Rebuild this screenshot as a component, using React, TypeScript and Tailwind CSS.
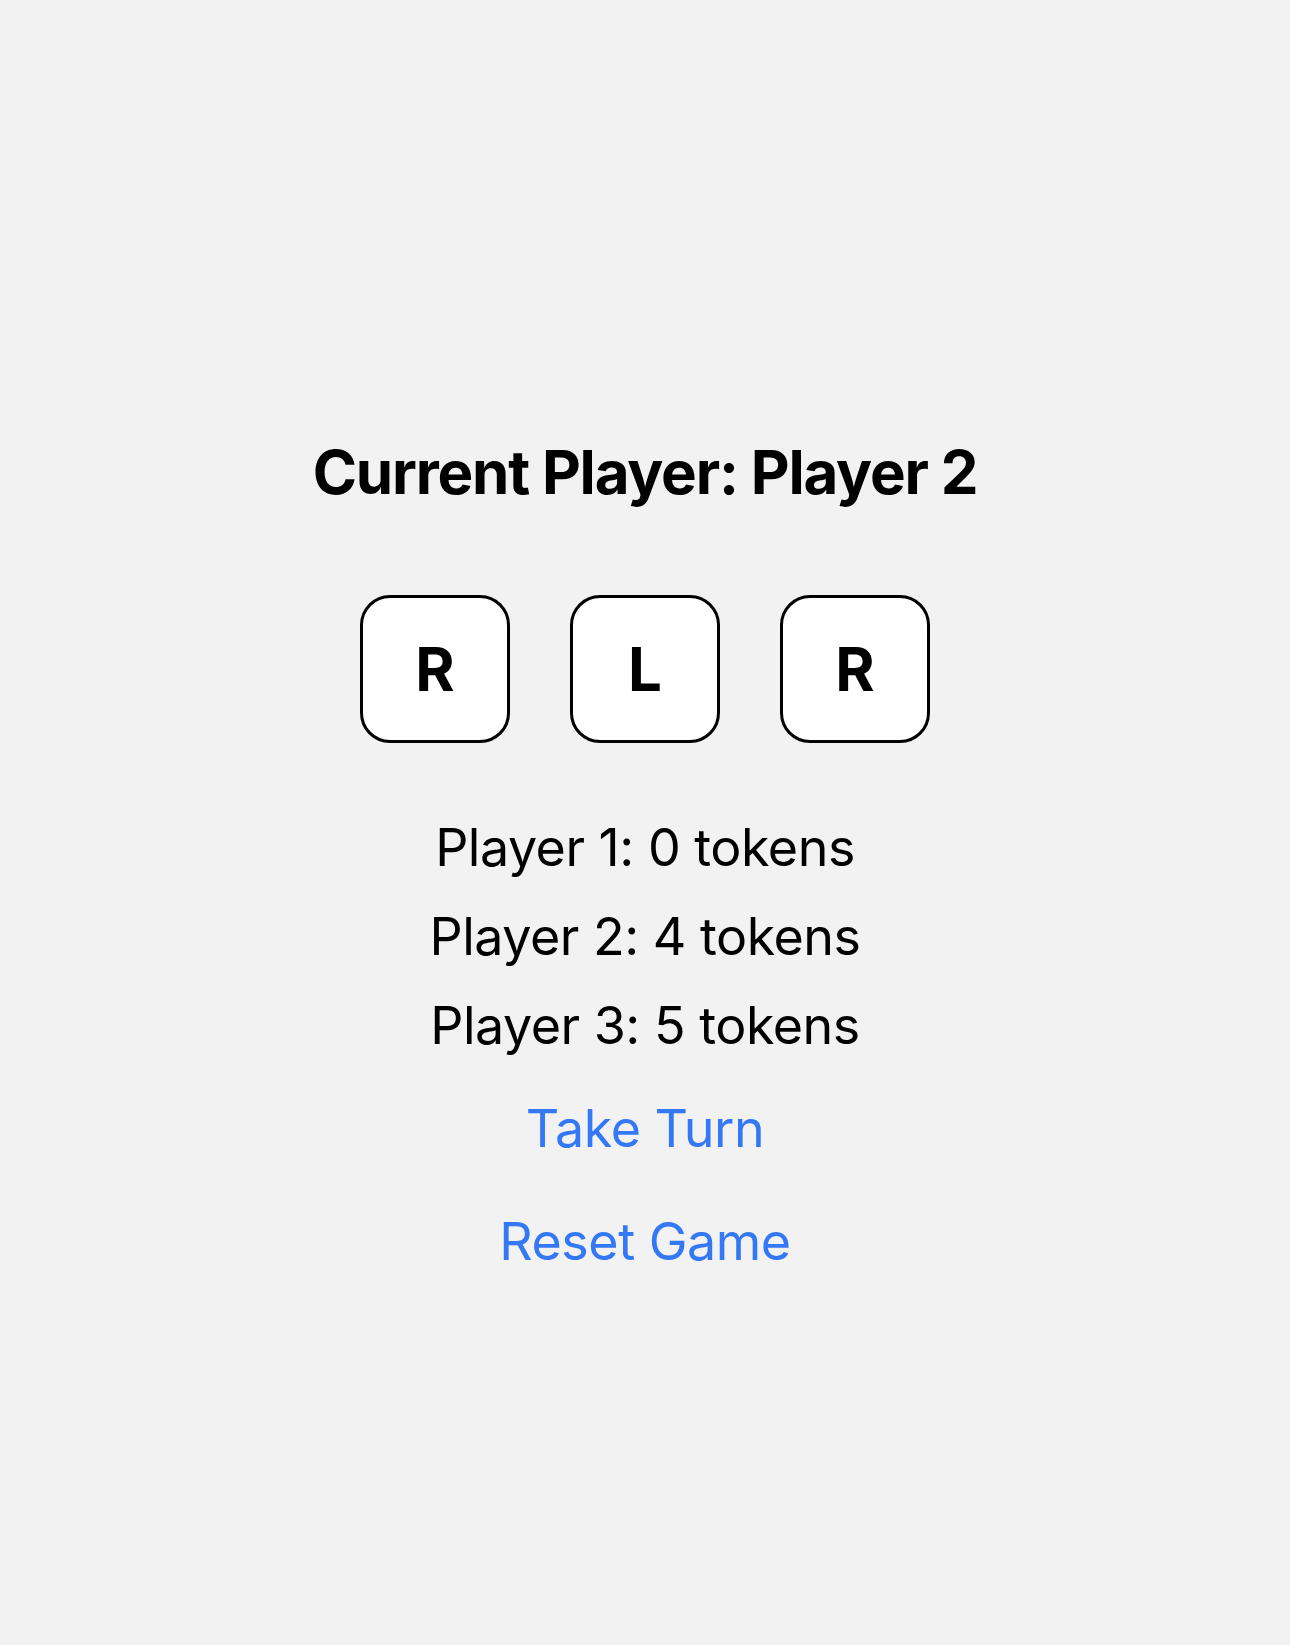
import React from "react";

const font = { fontFamily: "Inter, 'Noto Sans', sans-serif" };

export default function App() {
  const letters = ["R", "L", "R"];
  const players = [
    { name: "Player 1", tokens: 0 },
    { name: "Player 2", tokens: 4 },
    { name: "Player 3", tokens: 5 },
  ];
  return (
    <div
      className="min-h-[1645px] w-full bg-[#f2f2f2] flex flex-col items-center pt-[436px] text-black"
      style={font}
    >
      <h1 className="text-[60px] leading-[72px] font-bold tracking-[-1.2px]">Current Player: Player 2</h1>
      <div className="mt-[87px] flex gap-[60px]">
        {letters.map((l, i) => (
          <div
            key={i}
            className="w-[150px] h-[148px] bg-white border-[3px] border-black rounded-[30px] flex items-center justify-center text-[60px] font-bold leading-none"
          >
            {l}
          </div>
        ))}
      </div>
      <div className="mt-[73px] flex flex-col items-center gap-[25px]">
        {players.map((p) => (
          <div key={p.name} className="text-[52px] leading-[64px] tracking-[-0.5px]">
            {p.name}: {p.tokens} tokens
          </div>
        ))}
      </div>
      <button className="mt-[39px] text-[52px] leading-[64px] tracking-[-0.5px] text-[#3478f6]">Take Turn</button>
      <button className="mt-[49px] text-[52px] leading-[64px] tracking-[-0.5px] text-[#3478f6]">Reset Game</button>
    </div>
  );
}
